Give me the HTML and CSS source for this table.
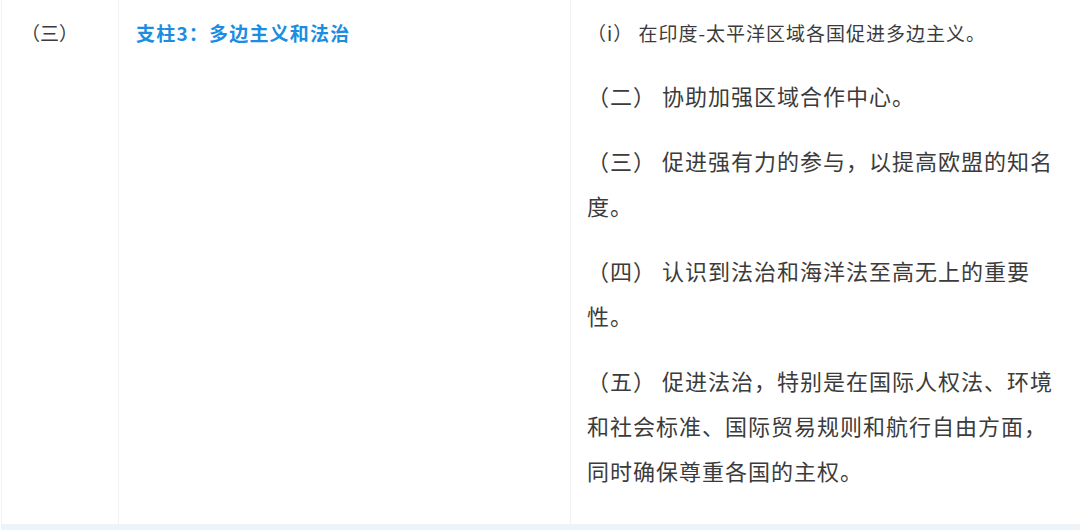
FILE: index.html
```html
<!DOCTYPE html>
<html lang="zh-CN">
<head>
    <meta charset="UTF-8">
    <meta name="viewport" content="width=device-width, initial-scale=1.0">
    <title>支柱3</title>
    <link rel="stylesheet" href="styles.css">
</head>
<body>
    <table class="pillars">
        <tr>
            <td class="num">（三）</td>
            <td class="pillar">支柱3：多边主义和法治</td>
            <td class="goals">
                <p class="small">（i） 在印度-太平洋区域各国促进多边主义。</p>
                <p>（二） 协助加强区域合作中心。</p>
                <p>（三） 促进强有力的参与，以提高欧盟的知名度。</p>
                <p>（四） 认识到法治和海洋法至高无上的重要性。</p>
                <p>（五） 促进法治，特别是在国际人权法、环境和社会标准、国际贸易规则和航行自由方面，同时确保尊重各国的主权。</p>
            </td>
        </tr>
        <tr class="next">
            <td></td>
            <td></td>
            <td></td>
        </tr>
    </table>
</body>
</html>
```

FILE: styles.css
```css
body {
    margin: 0;
    padding: 0;
    background: #fff;
    font-family: "Noto Sans CJK SC", "Noto Sans", sans-serif;
    color: #3b3b3b;
}
.pillars {
    border-collapse: collapse;
    width: 1081px;
    margin-left: 1px;
    table-layout: fixed;
}
.pillars td {
    border: 1px solid #f2f2f2;
    border-top: none;
    vertical-align: top;
    padding: 10px 0 0 0;
}
.num {
    width: 117px;
    font-size: 19px;
    line-height: 45px;
    padding-left: 19px !important;
    box-sizing: border-box;
}
.pillar {
    width: 452px;
    font-size: 19px;
    letter-spacing: 1.2px;
    line-height: 45px;
    font-weight: bold;
    color: #1b8de3;
    padding-left: 17px !important;
    box-sizing: border-box;
}
.goals {
    padding: 10px 16px 31px 16px !important;
    font-size: 22px;
    letter-spacing: 1px;
    line-height: 45px;
}
.goals p {
    margin: 0 0 20px 0;
}
.goals p:last-child {
    margin-bottom: 0;
}
.goals .small {
    font-size: 19px;
    margin-bottom: 18px;
}
.next td {
    height: 5px;
    padding: 0;
    background: #edf5fc;
}
```
